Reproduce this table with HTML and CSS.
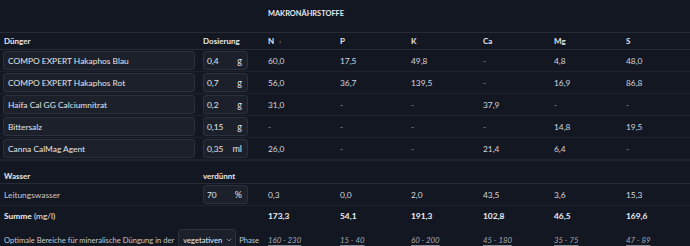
FILE: index.html
```html
<!DOCTYPE html>
<html lang="de">
<head>
<meta charset="utf-8">
<link rel="stylesheet" href="styles.css">
</head>
<body>
<div class="panel">
  <div class="title-row">
    <div class="span2"></div>
    <div class="title">MAKRONÄHRSTOFFE</div>
  </div>
  <div class="row head">
    <div class="c-name">Dünger</div>
    <div>Dosierung</div>
    <div>N <span class="chev">›</span></div>
    <div>P</div><div>K</div><div>Ca</div><div>Mg</div><div>S</div>
  </div>
  <div class="row">
    <div class="c-name"><div class="inp name">COMPO EXPERT Hakaphos Blau</div></div>
    <div><div class="inp dose"><span>0,4</span><span class="unit">g</span></div></div>
    <div>60,0</div><div>17,5</div><div>49,8</div><div class="dash">-</div><div>4,8</div><div>48,0</div>
  </div>
  <div class="row">
    <div class="c-name"><div class="inp name">COMPO EXPERT Hakaphos Rot</div></div>
    <div><div class="inp dose"><span>0,7</span><span class="unit">g</span></div></div>
    <div>56,0</div><div>36,7</div><div>139,5</div><div class="dash">-</div><div>16,9</div><div>86,8</div>
  </div>
  <div class="row">
    <div class="c-name"><div class="inp name">Haifa Cal GG Calciumnitrat</div></div>
    <div><div class="inp dose"><span>0,2</span><span class="unit">g</span></div></div>
    <div>31,0</div><div class="dash">-</div><div class="dash">-</div><div>37,9</div><div class="dash">-</div><div class="dash">-</div>
  </div>
  <div class="row">
    <div class="c-name"><div class="inp name">Bittersalz</div></div>
    <div><div class="inp dose"><span>0,15</span><span class="unit">g</span></div></div>
    <div class="dash">-</div><div class="dash">-</div><div class="dash">-</div><div class="dash">-</div><div>14,8</div><div>19,5</div>
  </div>
  <div class="row">
    <div class="c-name"><div class="inp name">Canna CalMag Agent</div></div>
    <div><div class="inp dose"><span>0,35</span><span class="unit">ml</span></div></div>
    <div>26,0</div><div class="dash">-</div><div class="dash">-</div><div>21,4</div><div>6,4</div><div class="dash">-</div>
  </div>
  <div class="row head water-head">
    <div class="c-name">Wasser</div>
    <div>verdünnt</div>
  </div>
  <div class="row water">
    <div class="c-name">Leitungswasser</div>
    <div><div class="inp dose"><span>70</span><span class="unit">%</span></div></div>
    <div>0,3</div><div>0,0</div><div>2,0</div><div>43,5</div><div>3,6</div><div>15,3</div>
  </div>
  <div class="row sum">
    <div class="c-name"><b>Summe</b> (mg/l)</div>
    <div></div>
    <div>173,3</div><div>54,1</div><div>191,3</div><div>102,8</div><div>46,5</div><div>169,6</div>
  </div>
  <div class="row optimal">
    <div class="c-opt">Optimale Bereiche für mineralische Düngung in der<span class="select">vegetativen<span class="sel-chev"><svg width="6" height="4" viewBox="0 0 6 4"><path d="M0.8 0.8 L3 3 L5.2 0.8" fill="none" stroke="#8b919c" stroke-width="0.9"/></svg></span></span>Phase</div>
    <div class="range"><span>160 - 230</span></div>
    <div class="range"><span>15 - 40</span></div>
    <div class="range"><span>60 - 200</span></div>
    <div class="range"><span>45 - 180</span></div>
    <div class="range"><span>35 - 75</span></div>
    <div class="range"><span>47 - 89</span></div>
  </div>
</div>
</body>
</html>
```
FILE: styles.css
```css
html, body {
  margin: 0;
  padding: 0;
  background: #131722;
}
body {
  font-family: "Lato", "Open Sans", sans-serif;
  font-size: 8.4px;
  color: #d3d6dd;
  width: 690px;
  height: 246px;
  overflow: hidden;
}
.panel {
  display: flex;
  flex-direction: column;
}
.title-row {
  height: 33px;
  display: grid;
  grid-template-columns: 268px 1fr;
  align-items: center;
  border-bottom: 1px solid #262b37;
  box-sizing: border-box;
}
.title {
  font-weight: 700;
  font-size: 7.4px;
  color: #e6e8ec;
  margin-top: -5px;
}
.row {
  display: grid;
  grid-template-columns: 200px 65px 72px 71px 72px 71px 72px 1fr;
  padding-left: 3px;
  align-items: center;
  height: 22px;
  border-bottom: 1px solid #1d222d;
  box-sizing: border-box;
}
.head {
  height: 17px;
  font-weight: 700;
  font-size: 8px;
  color: #e3e5ea;
  border-bottom: 1px solid #262b37;
}
.head .c-name { padding-left: 1px; }
.chev {
  color: #8b919c;
  font-weight: 400;
  margin-left: 3px;
}
.inp {
  background: #1b202b;
  border: 1px solid #2a303c;
  border-radius: 3px;
  box-sizing: border-box;
  height: 19px;
  display: flex;
  align-items: center;
  color: #e2e4e9;
}
.name {
  width: 192px;
  padding-left: 4px;
}
.dose {
  width: 45px;
  padding: 0 5px 0 3px;
  justify-content: space-between;
}
.unit {
  font-size: 9px;
}
.dash { color: #9aa0aa; }
.water-head {
  height: 24px;
  padding-top: 8px;
  border-bottom: 1px solid #262b37;
  border-top: 1px solid #1d222d;
}
.water {
  height: 22px;
}
.water .c-name { padding-left: 1px; color: #c3c7cf; }
.sum {
  height: 20px;
  font-weight: 700;
  color: #eceef2;
  border-bottom: none;
}
.sum .c-name { padding-left: 1px; font-weight: 400; }
.sum .c-name b { font-weight: 700; }
.optimal {
  grid-template-columns: 265px 72px 71px 72px 71px 72px 1fr;
  height: 24px;
  border-bottom: none;
  align-items: center;
  padding-top: 3px;
}
.c-opt {
  padding-left: 1px;
  font-size: 7.6px;
  color: #c3c7cf;
  white-space: nowrap;
  display: flex;
  align-items: center;
}
.select {
  display: inline-flex;
  align-items: center;
  background: #1b202b;
  border: 1px solid #2a303c;
  border-radius: 3px;
  height: 22px;
  padding: 0 3px 0 4px;
  color: #e8eaee;
  margin: 0 3px 0 4px;
  box-sizing: border-box;
  font-size: 7.6px;
}
.sel-chev {
  display: inline-flex;
  margin-left: 4px;
}
.range span {
  font-style: italic;
  font-size: 7.8px;
  color: #a4a9b2;
  text-decoration: underline;
  text-underline-offset: 2px;
  text-decoration-color: #80868f;
}
```
